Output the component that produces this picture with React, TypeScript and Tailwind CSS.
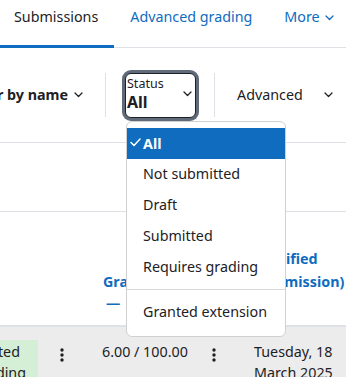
import React from "react";

const Chevron = ({ className = "" }: { className?: string }) => (
  <svg className={"shrink-0 " + className} width="9" height="6" viewBox="0 0 9 6" fill="none">
    <path d="M1 1l3.5 3.5L8 1" stroke="currentColor" strokeWidth="1.3" strokeLinecap="round" strokeLinejoin="round" />
  </svg>
);

const Kebab = () => (
  <svg width="4" height="14" viewBox="0 0 4 14" fill="#1d2125">
    <circle cx="2" cy="2" r="1.7" />
    <circle cx="2" cy="7" r="1.7" />
    <circle cx="2" cy="12" r="1.7" />
  </svg>
);

export default function App() {
  const items = ["Not submitted", "Draft", "Submitted", "Requires grading"];
  return (
    <div
      className="relative w-[346px] h-[377px] overflow-hidden bg-white text-[#1d2125]"
      style={{ fontFamily: '"Noto Sans", "Open Sans", sans-serif' }}
    >
      {/* Tabs */}
      <div className="flex h-[48px] border-b border-[#dee2e6] ml-[-2px] text-[14.3px]">
        <div className="px-4 pt-[6px] border-b-[3px] border-[#0f6cbf] mb-[-1px] whitespace-nowrap">Submissions</div>
        <div className="px-4 pt-[6px] text-[#0f6cbf] whitespace-nowrap">Advanced grading</div>
        <div className="px-4 pt-[6px] text-[#0f6cbf] whitespace-nowrap flex items-start gap-[5px]">
          <span>More</span>
          <Chevron className="mt-[9px]" />
        </div>
      </div>

      {/* Filters */}
      <div className="flex items-center h-[95px] border-b border-[#dee2e6] text-[14.3px]">
        <div className="w-[105px] shrink-0 flex justify-end items-center pr-[22px] gap-[6px] whitespace-nowrap font-bold">
          <span className="shrink-0">Filter by name</span>
          <Chevron />
        </div>
        <div className="w-px h-[44px] bg-[#dee2e6] shrink-0" />
        <div className="w-[108px] shrink-0 flex items-center pl-[16px]">
          <div className="w-[77px] h-[51px] rounded-[9px] bg-[#5f6b78] p-[3px]">
            <div className="w-full h-full rounded-[6px] bg-white border border-[#1d2125] flex items-center pl-[1px] pr-[3px]">
              <div className="flex-1 leading-none">
                <div className="text-[12.5px] leading-[14px] mt-[-2px]">Status</div>
                <div className="text-[16px] font-bold leading-[20px] mt-[1px]">All</div>
              </div>
              <Chevron className="mt-[-2px]" />
            </div>
          </div>
        </div>
        <div className="w-px h-[44px] bg-[#dee2e6] shrink-0" />
        <div className="flex items-center pl-[22px] whitespace-nowrap">
          <span>Advanced</span>
          <Chevron className="ml-[21px]" />
        </div>
      </div>

      {/* Empty row */}
      <div className="h-[69px] border-b border-[#dee2e6]" />

      {/* Table header */}
      <div className="flex h-[115px] border-b-2 border-[#dee2e6] text-[14.3px] font-bold text-[#0f6cbf] leading-[23px]">
        <div className="w-[102px] shrink-0" />
        <div className="w-[152px] shrink-0 pt-[58px] pl-[1px]">
          <div>Grade</div>
          <div className="leading-[20px] pl-[3px]">—</div>
        </div>
        <div className="pt-[12px] whitespace-nowrap">
          <div>Last</div>
          <div>modified</div>
          <div>(submission)</div>
        </div>
      </div>

      {/* Body row */}
      <div className="flex bg-[#ececec] h-[60px] pt-[13px] text-[14.3px] leading-[21px]">
        <div className="w-[38px] shrink-0 bg-[#d4efd6] pt-[1px] overflow-hidden flex justify-end">
          <div className="whitespace-nowrap pr-[12px] shrink-0">
            <div>Submitted</div>
            <div>for grading</div>
          </div>
        </div>
        <div className="w-[64px] shrink-0 flex justify-start pl-[22px] pt-[8px]">
          <Kebab />
        </div>
        <div className="w-[100px] shrink-0 whitespace-nowrap pt-[1px]">6.00 / 100.00</div>
        <div className="w-[52px] shrink-0 flex justify-start pl-[10px] pt-[8px]">
          <Kebab />
        </div>
        <div className="whitespace-nowrap pt-[1px]">
          <div>Tuesday, 18</div>
          <div>March 2025</div>
        </div>
      </div>

      {/* Dropdown menu */}
      <div className="absolute left-[126px] top-[121px] w-[160px] bg-white border border-[#d0d0d0] rounded-[6px] pt-[6px] pb-[8px] text-[14.3px]">
        <div className="h-[30.75px] bg-[#0f6cbf] text-white font-bold flex items-center pl-[3px]">
          <svg width="11" height="9" viewBox="0 0 11 9" fill="none" className="mr-[2px] mt-[-2px]">
            <path d="M1 4.5l3 3L10 1" stroke="white" strokeWidth="1.5" strokeLinecap="round" strokeLinejoin="round" />
          </svg>
          <span>All</span>
        </div>
        {items.map((t) => (
          <div key={t} className="h-[30.75px] flex items-center pl-[16px] whitespace-nowrap">
            {t}
          </div>
        ))}
        <div className="h-px bg-[#d8d8d8] my-[7px]" />
        <div className="h-[30.75px] flex items-center pl-[16px] whitespace-nowrap">Granted extension</div>
      </div>
    </div>
  );
}
